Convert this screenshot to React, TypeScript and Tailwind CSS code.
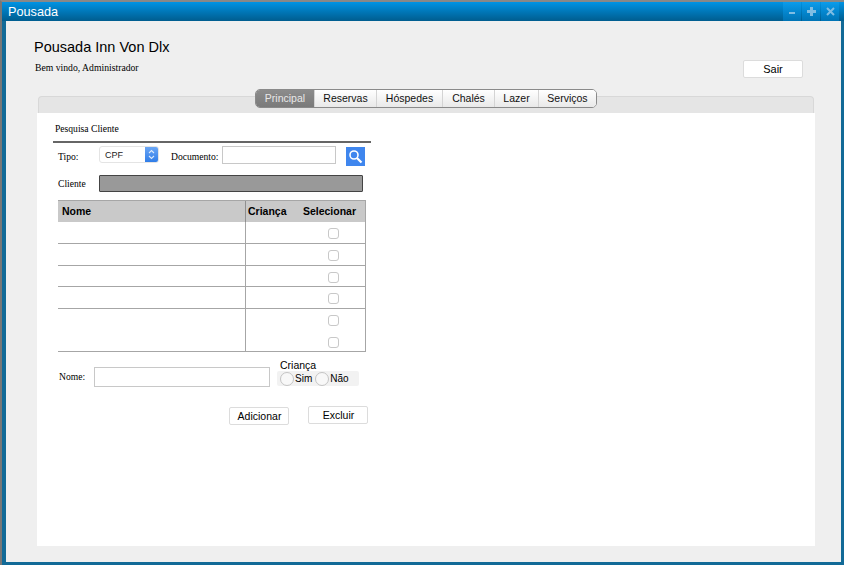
const TABS = [
  { label: 'Principal', width: 'w-[58px]' },
  { label: 'Reservas', width: 'w-[62px]' },
  { label: 'Hóspedes', width: 'w-[66px]' },
  { label: 'Chalés', width: 'w-[52px]' },
  { label: 'Lazer', width: 'w-[44px]' },
  { label: 'Serviços', width: 'w-[58px]' },
]

const ROWS = [
  { height: 'h-[22px]', boxes: 1 },
  { height: 'h-[22px]', boxes: 1 },
  { height: 'h-[21px]', boxes: 1 },
  { height: 'h-[22px]', boxes: 1 },
  { height: 'h-[43px]', boxes: 2 },
]

function Checkbox() {
  return <span className="block w-[11px] h-[11px] rounded-[3px] border border-[#c8c8c8] bg-white" />
}

function Radio() {
  return <span className="block w-[14px] h-[14px] rounded-full border border-[#c4c4c4] bg-[#f8f8f8]" />
}

function WindowButton({ children }: { children: React.ReactNode }) {
  return (
    <div className="w-[18px] h-full flex items-center justify-center bg-gradient-to-b from-[#0b9cec] to-[#0073b4]">
      {children}
    </div>
  )
}

export default function App() {
  return (
    <div className="w-[844px] h-[566px] bg-white font-['Liberation_Sans',sans-serif] text-black overflow-hidden">
      <div className="h-[565px] flex flex-col border-l-2 border-t-2 border-l-[#777] border-t-[#888]">
        {/* Title bar */}
        <div className="h-[19px] shrink-0 flex items-center bg-gradient-to-b from-[#0093e4] to-[#005d8f]">
          <span className="ml-[6px] mt-[2px] text-white text-[12.7px] leading-none">Pousada</span>
          <div className="ml-auto mr-[5px] h-full flex gap-[1px]">
            <WindowButton>
              <span className="block w-[6px] h-[2px] mt-[3px] bg-[#7fbde3]" />
            </WindowButton>
            <WindowButton>
              <svg width="9" height="9" viewBox="0 0 9 9" fill="#7fbde3">
                <path d="M3 0h3v3h3v3H6v3H3V6H0V3h3z" />
              </svg>
            </WindowButton>
            <WindowButton>
              <svg width="9" height="9" viewBox="0 0 9 9" stroke="#7fbde3" strokeWidth="2">
                <path d="M1 1l7 7M8 1L1 8" />
              </svg>
            </WindowButton>
          </div>
        </div>

        {/* Window body */}
        <div className="flex-1 flex flex-col border-l-[4px] border-r-[3px] border-b-[3px] border-[#126a97] bg-[#efefef] pl-[31px] pr-[26px] pb-[16px]">
          <div className="flex items-start justify-between ml-[-3px] mr-[12px] h-[68px]">
            <div>
              <h1 className="mt-[18px] text-[14.5px] leading-[17px] font-normal">Pousada Inn Von Dlx</h1>
              <p className="mt-[6px] ml-[1px] font-['Liberation_Serif',serif] text-[9.7px] leading-[12px]">
                Bem vindo, Administrador
              </p>
            </div>
            <button className="mt-[39px] w-[60px] h-[18px] bg-white rounded-[2px] border border-[#dcdcdc] text-[11px] leading-none">
              Sair
            </button>
          </div>

          {/* Tab header */}
          <div className="h-[17px] mx-[1px] shrink-0 bg-[#e5e5e5] border-t border-x border-[#d8d8d8] rounded-t-[4px] mt-[7px] flex justify-center">
            <div className="h-[19px] -mt-[8px] flex rounded-[5px] border border-[#8a8a8a] overflow-hidden bg-white">
              {TABS.map((tab, i) => (
                <div
                  key={tab.label}
                  className={`${tab.width} flex items-center justify-center text-[10.5px] leading-none ${
                    i === 0
                      ? 'bg-gradient-to-b from-[#8c8c8c] to-[#7a7a7a] text-[#e8e8e8]'
                      : 'bg-gradient-to-b from-white to-[#e9e9e9] border-l border-[#d4d4d4] text-[#111]'
                  }`}
                >
                  {tab.label}
                </div>
              ))}
            </div>
          </div>

          {/* Panel */}
          <div className="flex-1 bg-white pl-[16px] pt-[10px]">
            <div className="w-[318px] font-['Liberation_Serif',serif] text-[9.6px] leading-[12px]">
              <div className="pl-[2px] pb-[6px]">Pesquisa Cliente</div>
              <div className="h-[2px] bg-[#666]" />

              <div className="mt-[3px] flex items-start h-[20px]">
                <span className="ml-[5px] w-[41px] mt-[5px]">Tipo:</span>
                <div className="w-[60px] h-[17px] flex rounded-[3px] border border-[#e4e4e4] overflow-hidden font-['Liberation_Sans',sans-serif] text-[9px]">
                  <span className="flex-1 pl-[5px] pt-[1px] leading-[15px] text-[#222]">CPF</span>
                  <span className="w-[13px] flex items-center justify-center bg-gradient-to-b from-[#6aa6f5] to-[#2f7de8]">
                    <svg width="7" height="11" viewBox="0 0 7 11" fill="none" stroke="#dbe9fb" strokeWidth="1.1">
                      <path d="M1 4l2.5-2.5L6 4M1 7l2.5 2.5L6 7" />
                    </svg>
                  </span>
                </div>
                <span className="ml-[12px] w-[51px] mt-[5px]">Documento:</span>
                <div className="w-[114px] h-[18px] border border-[#c8c8c8] bg-white" />
                <div className="ml-[10px] mt-[1px] w-[19px] h-[19px] flex items-center justify-center bg-[#3f86ee]">
                  <svg width="15" height="15" viewBox="0 0 15 15" fill="none" stroke="white">
                    <circle cx="6" cy="6" r="4" strokeWidth="1.6" />
                    <path d="M9 9l4.5 4.5" strokeWidth="2.2" />
                  </svg>
                </div>
              </div>

              <div className="mt-[8px] flex items-center h-[18px]">
                <span className="ml-[5px] w-[41px] pt-[2px]">Cliente</span>
                <div className="w-[264px] h-[17px] bg-[#999] border border-[#444] rounded-[1px]" />
              </div>

              {/* Table */}
              <div className="mt-[8px] ml-[5px] w-[308px] border-t border-r border-[#a6a6a6] font-['Liberation_Sans',sans-serif]">
                <div className="h-[21px] flex bg-[#c9c9c9] text-[10.5px] leading-none font-bold">
                  <div className="w-[188px] flex items-center pl-[4px] border-r border-[#8f8f8f]">Nome</div>
                  <div className="flex-1 flex items-center justify-between pl-[2px] pr-[9px]">
                    <span>Criança</span>
                    <span>Selecionar</span>
                  </div>
                </div>
                {ROWS.map((row, i) => (
                  <div key={i} className={`${row.height} flex border-b border-[#a6a6a6]`}>
                    <div className="w-[188px] border-r border-[#a6a6a6]" />
                    <div className="flex-1 flex flex-col items-center gap-[11px] pl-[55px] pt-[6px]">
                      {Array.from({ length: row.boxes }).map((_, j) => (
                        <Checkbox key={j} />
                      ))}
                    </div>
                  </div>
                ))}
              </div>

              {/* Child form */}
              <div className="mt-[7px] flex items-end">
                <span className="ml-[6px] w-[35px] mb-[4px]">Nome:</span>
                <div className="w-[176px] h-[20px] border border-[#c8c8c8] bg-white" />
                <div className="ml-[7px] mb-[1px] font-['Liberation_Sans',sans-serif] text-[10px]">
                  <div className="ml-[3px] text-[10.5px] leading-[12px]">Criança</div>
                  <div className="w-[82px] h-[15px] flex items-center pl-[3px] bg-[#f2f2f2] rounded-[2px] leading-none">
                    <Radio />
                    <span className="ml-[1px]">Sim</span>
                    <span className="ml-[3px]"><Radio /></span>
                    <span className="ml-[1px]">Não</span>
                  </div>
                </div>
              </div>

              <div className="mt-[19px] ml-[176px] flex items-start gap-[19px] font-['Liberation_Sans',sans-serif] text-[10.5px] leading-none">
                <button className="mt-[1px] w-[60px] h-[18px] pl-[1px] bg-white border border-[#dcdcdc] rounded-[2px]">Adicionar</button>
                <button className="w-[60px] h-[18px] pl-[1px] bg-white border border-[#dcdcdc] rounded-[2px]">Excluir</button>
              </div>
            </div>
          </div>
        </div>
      </div>
    </div>
  )
}
